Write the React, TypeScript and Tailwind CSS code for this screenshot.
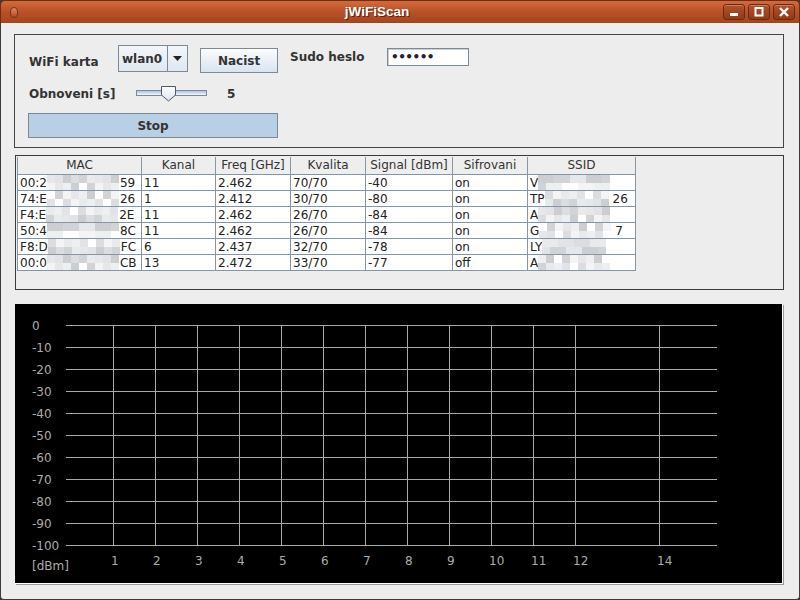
import React from 'react';

const tones = ['#e6e7ea', '#dcdde1', '#eeeff1', '#d2d3d7', '#e2e3e6', '#f4f4f5', '#cdced2', '#e9eaec', '#ffffff'];

// pixelated blur block used to hide parts of MAC / SSID
const Mosaic: React.FC<{ width: number; seed: number }> = ({ width, seed }) => {
  const cols = Math.ceil(width / 8);
  const cells = [];
  for (let r = 0; r < 2; r++) {
    for (let c = 0; c < cols; c++) {
      const t = tones[(seed * 7 + c * 3 + r * 5 + ((c * c + seed) % 4)) % tones.length];
      cells.push(<span key={r + '-' + c} className="block w-[8px] h-[8px]" style={{ backgroundColor: t }} />);
    }
  }
  return (
    <span className="inline-flex flex-wrap h-[16px] overflow-hidden align-top" style={{ width }}>
      {cells}
    </span>
  );
};

const cols = [
  { name: 'MAC', w: 'w-[125px]' },
  { name: 'Kanal', w: 'w-[74px]' },
  { name: 'Freq [GHz]', w: 'w-[75px]' },
  { name: 'Kvalita', w: 'w-[75px]' },
  { name: 'Signal [dBm]', w: 'w-[87px]' },
  { name: 'Sifrovani', w: 'w-[75px]' },
  { name: 'SSID', w: 'w-[108px]' },
];

const rows = [
  { mac: ['00:2', '59'], ch: '11', f: '2.462', q: '70/70', s: '-40', e: 'on', ssid: ['V', ''] },
  { mac: ['74:E', '26'], ch: '1', f: '2.412', q: '30/70', s: '-80', e: 'on', ssid: ['TP', '26'] },
  { mac: ['F4:E', '2E'], ch: '11', f: '2.462', q: '26/70', s: '-84', e: 'on', ssid: ['A', ''] },
  { mac: ['50:4', '8C'], ch: '11', f: '2.462', q: '26/70', s: '-84', e: 'on', ssid: ['G', '7'] },
  { mac: ['F8:D', 'FC'], ch: '6', f: '2.437', q: '32/70', s: '-78', e: 'on', ssid: ['LY', ''] },
  { mac: ['00:0', 'CB'], ch: '13', f: '2.472', q: '33/70', s: '-77', e: 'off', ssid: ['A', ''] },
];

const cell = 'h-[16px] border-r border-b border-[#8796a5] pl-[2px] leading-[16px] whitespace-nowrap overflow-hidden bg-white';

const TitleBar = () => (
  <div className="h-[23px] flex items-center rounded-t-[5px] border border-b-0 border-[#6e2c12] bg-gradient-to-b from-[#d26b3c] via-[#b95026] to-[#a2451f]">
    <div className="w-[30px] pl-[9px] flex items-center">
      <span className="block w-[8px] h-[11px] rounded-full border border-[#7a3316] bg-gradient-to-b from-[#e08a60] to-[#b04a22]" />
    </div>
    <div className="flex-1 text-center text-white font-bold text-[13.5px] font-['Liberation_Sans'] [text-shadow:1px_1px_0_#5a2410]">
      jWiFiScan
    </div>
    <div className="flex items-center gap-[3px] pr-[4px]">
      {['min', 'max', 'close'].map((k) => (
        <div
          key={k}
          className="w-[22px] h-[16px] rounded-[3px] border border-[#6a2a10] bg-gradient-to-b from-[#b65329] to-[#8f3a18] flex items-center justify-center shadow-[inset_0_1px_0_rgba(255,255,255,0.25)]"
        >
          <svg width="12" height="10" viewBox="0 0 12 10">
            {k === 'min' && <rect x="2" y="6" width="8" height="3" fill="white" />}
            {k === 'max' && <rect x="2.5" y="1" width="7" height="7.5" fill="none" stroke="white" strokeWidth="2" />}
            {k === 'close' && <path d="M2 1 L10 9 M10 1 L2 9" stroke="white" strokeWidth="2.4" />}
          </svg>
        </div>
      ))}
    </div>
  </div>
);

const Controls = () => (
  <div className="h-[114px] border border-[#454545] pl-[13px] pt-[10px] text-[12px] font-bold text-[#333]">
    <div className="flex items-start h-[27px]">
      <span className="w-[89px] ml-[1px] mt-[9px] leading-[16px]">WiFi karta</span>
      <div className="w-[70px] h-[27px] flex border border-[#7a8a99] bg-gradient-to-b from-[#f3f6f9] to-[#dfe7f0]">
        <div className="flex-1 flex items-center pl-[3px] border-r border-[#7a8a99]">wlan0</div>
        <div className="w-[19px] flex items-center justify-center">
          <svg width="9" height="5" viewBox="0 0 9 5">
            <path d="M0 0 H9 L4.5 5 Z" fill="#222" />
          </svg>
        </div>
      </div>
      <button className="ml-[12px] mt-[3px] w-[78px] h-[25px] border border-[#7a8a99] bg-gradient-to-b from-[#fbfcfd] to-[#d9e4f0] font-bold">
        Nacist
      </button>
      <span className="ml-[12px] mt-[4px] w-[97px] leading-[16px]">Sudo heslo</span>
      <div className="mt-[3px] w-[82px] h-[18px] border border-[#7a8a99] bg-white pl-[3px] leading-[16px] text-[#223] tracking-[-0.5px] shadow-[inset_1px_1px_0_#c8d0d8]">
        ••••••
      </div>
    </div>
    <div className="flex items-center h-[18px] mt-[13px]">
      <span className="w-[107px] ml-[1px] leading-[16px]">Obnoveni [s]</span>
      <div className="relative w-[71px] h-[18px]">
        <div className="absolute left-0 right-0 top-[5px] h-[6px] border border-[#7a8a99] bg-gradient-to-b from-[#a9c3de] to-[#f4f7fa]" />
        <svg className="absolute left-[25px] top-[1px]" width="16" height="16" viewBox="0 0 16 16">
          <defs>
            <linearGradient id="th" x1="0" y1="0" x2="0" y2="1">
              <stop offset="0" stopColor="#ffffff" />
              <stop offset="1" stopColor="#dbe4ee" />
            </linearGradient>
          </defs>
          <path d="M0.5 0.5 H14.5 V9 L7.5 15 L0.5 9 Z" fill="url(#th)" stroke="#4f5c68" />
        </svg>
      </div>
      <span className="ml-[20px] leading-[16px]">5</span>
    </div>
    <button className="mt-[10px] w-[250px] h-[25px] border border-[#7a8a99] bg-[#b8cfe5] font-bold block">Stop</button>
  </div>
);

const Table = () => (
  <div className="ml-[1px] mt-[7px] h-[135px] border border-[#3a3a3a] p-[1px] bg-[#ededed] text-[12px] font-normal text-[#222]">
    <div className="flex">
      {cols.map((c, i) => (
        <div
          key={c.name}
          className={`${c.w} h-[18px] bg-[#eeeeee] border-r border-b border-[#8796a5] text-center leading-[17px] text-[#333] ${i === 0 ? 'border-l' : ''}`}
        >
          {c.name}
        </div>
      ))}
    </div>
    {rows.map((r, i) => (
      <div key={i} className="flex">
        <div className={`${cell} w-[125px] border-l`}>
          {r.mac[0]}
          <Mosaic width={72} seed={i} />
          <span className="pl-[1px]">{r.mac[1]}</span>
        </div>
        <div className={`${cell} w-[74px]`}>{r.ch}</div>
        <div className={`${cell} w-[75px]`}>{r.f}</div>
        <div className={`${cell} w-[75px]`}>{r.q}</div>
        <div className={`${cell} w-[87px]`}>{r.s}</div>
        <div className={`${cell} w-[75px]`}>{r.e}</div>
        <div className={`${cell} w-[108px]`}>
          {r.ssid[0]}
          <Mosaic width={r.ssid[0].length > 1 ? 68 : 76} seed={i + 3} />
          {r.ssid[1]}
        </div>
      </div>
    ))}
  </div>
);

const Chart = () => {
  const hLines = Array.from({ length: 11 }, (_, i) => 21 + 22 * i);
  const channels = [1, 2, 3, 4, 5, 6, 7, 8, 9, 10, 11, 12, 14];
  const cx = (n: number) => 98.5 + 42 * (n - 1);
  return (
    <div className="ml-[1px] mt-[14px] h-[280px] w-[768px] bg-black border-r border-b border-white shadow-[1px_1px_0_#9a9a9a]">
      <svg width="767" height="279" viewBox="0 0 767 279" className="block">
        <g stroke="#a8a8a8" strokeWidth="1" shapeRendering="crispEdges">
          {hLines.map((y) => (
            <line key={y} x1="51" x2="702" y1={y + 0.5} y2={y + 0.5} />
          ))}
          {channels.map((n) => (
            <line key={n} x1={cx(n)} x2={cx(n)} y1="21" y2="241" />
          ))}
        </g>
        <g fill="#ababab" fontFamily="DejaVu Sans" fontSize="12">
          {hLines.map((y, i) => (
            <text key={y} x="17" y={y + 4.5}>
              {i === 0 ? '0' : `-${i * 10}`}
            </text>
          ))}
          {channels.map((n) => (
            <text key={n} x={cx(n) - 2.5} y="261">
              {n}
            </text>
          ))}
          <text x="17" y="266">[dBm]</text>
        </g>
      </svg>
    </div>
  );
};

export default function App() {
  return (
    <div className="w-[800px] h-[600px] flex flex-col font-['DejaVu_Sans'] bg-[#3c3b37]">
      <TitleBar />
      <div className="flex-1 bg-[#ededed] border-x border-b border-[#3c3b37] rounded-b-[4px] pl-[13px] pr-[15px] pt-[11px]">
        <Controls />
        <Table />
        <Chart />
      </div>
    </div>
  );
}
